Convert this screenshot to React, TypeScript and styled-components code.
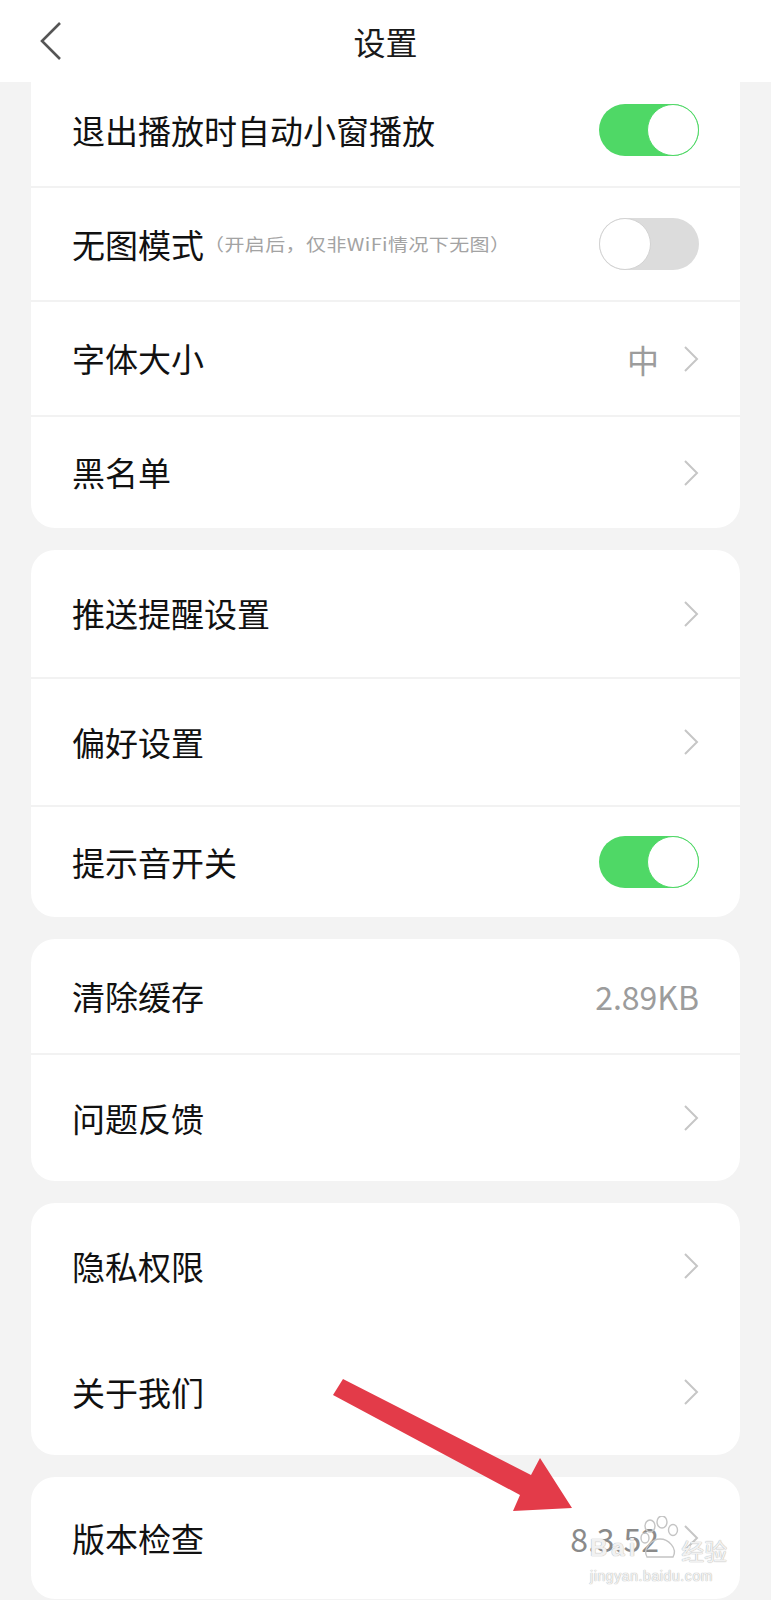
import styled, { createGlobalStyle } from 'styled-components'

const GlobalStyle = createGlobalStyle`
  body {
    margin: 0;
    background: #f3f3f3;
    font-family: "Noto Sans CJK SC", "Noto Sans", sans-serif;
  }
`

const Page = styled.div`
  position: relative;
  width: 771px;
  height: 1600px;
  overflow: hidden;
  background: #f3f3f3;
`

const Header = styled.header`
  height: 82px;
  background: #fff;
  display: grid;
  grid-template-columns: 100px 1fr 100px;
  align-items: center;
`

const BackButton = styled.button`
  border: 0;
  background: none;
  padding: 0 0 0 38px;
  height: 44px;
  display: flex;
  align-items: center;
`

const Title = styled.h1`
  margin: 0;
  text-align: center;
  font-size: 32px;
  font-weight: 400;
  color: #1a1a1a;
`

const List = styled.main`
  display: flex;
  flex-direction: column;
  gap: 22px;
  padding: 0 31px;
`

const Card = styled.section<{ $flatTop?: boolean }>`
  background: #fff;
  border-radius: ${(p) => (p.$flatTop ? '0 0 24px 24px' : '24px')};
  overflow: hidden;
`

const Row = styled.div<{ $h: number; $divider?: boolean; $lift?: number }>`
  height: ${(p) => p.$h}px;
  box-sizing: border-box;
  display: flex;
  align-items: center;
  justify-content: space-between;
  padding: 0 41px ${(p) => p.$lift ?? 0}px;
  border-top: ${(p) => (p.$divider ? '2px solid #f2f2f2' : 'none')};
`

const Label = styled.span`
  font-size: 33px;
  line-height: 1;
  color: #111;
  display: flex;
  align-items: center;
`

const Hint = styled.span`
  font-size: 20px;
  letter-spacing: 0.4px;
  color: #a3a3a3;
  display: inline-block;
  transform: scaleY(0.86);
`

const Trail = styled.span`
  display: flex;
  align-items: center;
  gap: 24px;
`

const Value = styled.span<{ $dark?: boolean }>`
  font-size: 32px;
  line-height: 1;
  color: ${(p) => (p.$dark ? '#8a8a8a' : '#9c9c9c')};
`

const Track = styled.span<{ $on?: boolean }>`
  width: 100px;
  height: 52px;
  border-radius: 26px;
  box-sizing: border-box;
  display: flex;
  justify-content: ${(p) => (p.$on ? 'flex-end' : 'flex-start')};
  background: ${(p) => (p.$on ? '#4fd866' : '#dcdcdc')};
`

const Knob = styled.span<{ $on?: boolean }>`
  width: 52px;
  height: 52px;
  border-radius: 50%;
  box-sizing: border-box;
  background: #fff;
  border: 1.5px solid ${(p) => (p.$on ? '#4fd866' : '#d2d2d2')};
`

const Arrow = styled.svg`
  position: absolute;
  left: 325px;
  top: 1370px;
  pointer-events: none;
`

const Watermark = styled.div`
  position: absolute;
  left: 590px;
  top: 1516px;
  display: flex;
  flex-direction: column;
  align-items: flex-start;
  color: rgba(250, 250, 250, 0.9);
  text-shadow: 0 0 1px #b8b8b8, 0 0 1px #b8b8b8;
  pointer-events: none;
`

const MarkLine = styled.div`
  display: flex;
  align-items: flex-end;
  font-family: "Liberation Sans", sans-serif;
  font-weight: 700;
  font-size: 24px;
  letter-spacing: 4px;
  line-height: 1;
`

const MarkCjk = styled.span`
  font-family: "Noto Sans CJK SC", sans-serif;
  font-weight: 400;
  font-size: 23px;
  letter-spacing: 0;
  margin-bottom: -2px;
`

const MarkUrl = styled.div`
  font-family: "Liberation Sans", sans-serif;
  font-size: 14px;
  letter-spacing: 0.6px;
  margin-top: 8px;
`

function Chevron() {
  return (
    <svg width="16" height="26" viewBox="0 0 16 26">
      <polyline points="2,1 14,13 2,25" fill="none" stroke="#c6c6c6" strokeWidth="2" />
    </svg>
  )
}

function Switch({ on }: { on?: boolean }) {
  return (
    <Track $on={on}>
      <Knob $on={on} />
    </Track>
  )
}

export default function App() {
  return (
    <Page>
      <GlobalStyle />
      <Header>
        <BackButton aria-label="返回">
          <svg width="24" height="40" viewBox="0 0 24 40">
            <polyline points="22,2 4,20 22,38" fill="none" stroke="#555" strokeWidth="2.6" />
          </svg>
        </BackButton>
        <Title>设置</Title>
        <span />
      </Header>
      <List>
        <Card $flatTop>
          <Row $h={104} $lift={8}>
            <Label>退出播放时自动小窗播放</Label>
            <Switch on />
          </Row>
          <Row $h={114} $divider>
            <Label>
              无图模式<Hint>（开启后，仅非WiFi情况下无图）</Hint>
            </Label>
            <Switch />
          </Row>
          <Row $h={115} $divider>
            <Label>字体大小</Label>
            <Trail>
              <Value>中</Value>
              <Chevron />
            </Trail>
          </Row>
          <Row $h={113} $divider>
            <Label>黑名单</Label>
            <Chevron />
          </Row>
        </Card>
        <Card>
          <Row $h={127}>
            <Label>推送提醒设置</Label>
            <Chevron />
          </Row>
          <Row $h={128} $divider>
            <Label>偏好设置</Label>
            <Chevron />
          </Row>
          <Row $h={112} $divider>
            <Label>提示音开关</Label>
            <Switch on />
          </Row>
        </Card>
        <Card>
          <Row $h={114}>
            <Label>清除缓存</Label>
            <Value>2.89KB</Value>
          </Row>
          <Row $h={128} $divider>
            <Label>问题反馈</Label>
            <Chevron />
          </Row>
        </Card>
        <Card>
          <Row $h={126}>
            <Label>隐私权限</Label>
            <Chevron />
          </Row>
          <Row $h={126}>
            <Label>关于我们</Label>
            <Chevron />
          </Row>
        </Card>
        <Card>
          <Row $h={122}>
            <Label>版本检查</Label>
            <Trail>
              <Value $dark>8.3.52</Value>
              <Chevron />
            </Trail>
          </Row>
        </Card>
      </List>
      <Arrow width="260" height="150" viewBox="325 1370 260 150">
        <polygon
          points="343,1379 531,1475 540,1458 572,1508 513,1511 520,1495 333,1395"
          fill="#e33b49"
        />
      </Arrow>
      <Watermark>
        <MarkLine>
          Bai
          <svg width="42" height="44" viewBox="0 0 42 44">
            <g fill="none" stroke="#c4c4c4" strokeWidth="1.4">
              <ellipse cx="11" cy="10" rx="5" ry="6" />
              <ellipse cx="23" cy="6" rx="5" ry="6" />
              <ellipse cx="34" cy="14" rx="4.5" ry="5.5" />
              <ellipse cx="6" cy="22" rx="4" ry="5" />
              <path d="M8 41 C3 32 14 23 21 23 C29 23 39 32 34 41 Z" />
            </g>
          </svg>
          <MarkCjk>经验</MarkCjk>
        </MarkLine>
        <MarkUrl>jingyan.baidu.com</MarkUrl>
      </Watermark>
    </Page>
  )
}
